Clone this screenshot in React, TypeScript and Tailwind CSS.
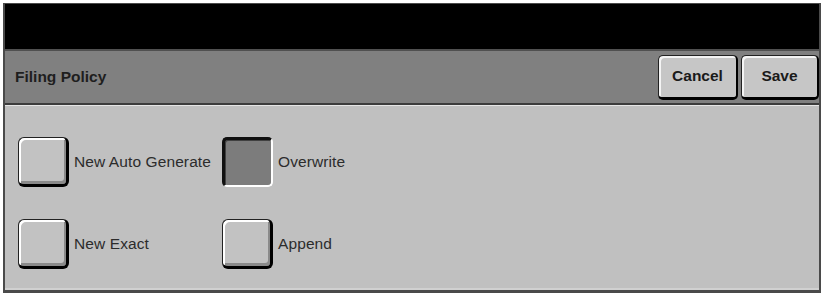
import React from "react";

function OptionButton({ selected }: { selected?: boolean }) {
  if (selected) {
    return (
      <div className="w-[51px] h-[50px] shrink-0 rounded-[5px] bg-[#7c7c7c] border-t-[3px] border-l-[3px] border-r-[2px] border-b-[2px] border-t-[#101010] border-l-[#101010] border-r-white border-b-white shadow-[inset_1px_1px_0_#404040]" />
  );
}
  return (
    <div className="w-[51px] h-[50px] shrink-0 rounded-[6px] bg-[#c2c2c2] border-[1.5px] border-b-[3px] border-r-[3px] border-[#222] border-b-black border-r-black shadow-[inset_2px_2px_0_#ffffff,inset_-2px_-3px_0_#8a8a8a]" />
  );
}

function Option({ label, selected }: { label: string; selected?: boolean }) {
  return (
    <div className="flex items-center gap-[5px]">
      <OptionButton selected={selected} />
      <span className="text-[15.5px] text-[#2c2c2c] leading-none tracking-[0.1px]">{label}</span>
    </div>
  );
}

function HeaderButton({ label, w }: { label: string; w: string }) {
  return (
    <div
      className={`${w} h-[45px] rounded-[5px] bg-[#c6c6c6] border-[1.5px] border-b-[3px] border-r-[2.5px] border-[#222] border-b-black border-r-black shadow-[inset_2px_2px_0_#f4f4f4] flex items-center justify-center`}
    >
      <span className="text-[15.5px] font-bold text-[#1a1a1a] leading-none">{label}</span>
    </div>
  );
}

export default function App() {
  return (
    <div
      className="w-[823px] h-[295px] bg-white pt-[3px] pl-[3px] pr-[2px]"
      style={{ fontFamily: '"Liberation Sans", Arial, sans-serif' }}
    >
      <div className="h-[290px] flex flex-col border-t border-l-2 border-r-2 border-b-[3px] border-[#4a4a4a]">
        <div className="h-[45px] bg-black shrink-0" />
        <div className="h-[2px] bg-[#505050] shrink-0" />
        <div className="h-[52px] bg-[#808080] shrink-0 flex items-center justify-between pl-[10px]">
          <span className="text-[15.5px] font-bold text-[#1e1e1e] leading-none">Filing Policy</span>
          <div className="flex items-center gap-[3px]">
            <HeaderButton label="Cancel" w="w-[80px]" />
            <HeaderButton label="Save" w="w-[78px]" />
          </div>
        </div>
        <div className="h-[2px] bg-[#3c3c3c] shrink-0" />
        <div className="flex-1 bg-[#c0c0c0] border-t border-t-[#e6e6e6] border-b-2 border-b-[#d0d0d0] pl-[13px] pt-[31px]">
          <div className="grid grid-cols-[204px_200px] gap-y-[32px]">
            <Option label="New Auto Generate" />
            <Option label="Overwrite" selected />
            <Option label="New Exact" />
            <Option label="Append" />
          </div>
        </div>
      </div>
    </div>
  );
}
